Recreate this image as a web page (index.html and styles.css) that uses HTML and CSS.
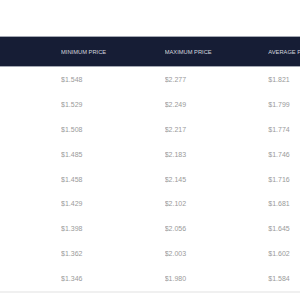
FILE: index.html
```html
<!DOCTYPE html>
<html>
<head>
<meta charset="utf-8">
<link rel="stylesheet" href="styles.css">
</head>
<body>
<div class="wrap">
<table class="prices">
  <colgroup>
    <col class="c-lead"><col class="c-val"><col class="c-val"><col class="c-val">
  </colgroup>
  <thead>
    <tr><th></th><th>MINIMUM PRICE</th><th>MAXIMUM PRICE</th><th>AVERAGE PRICE</th></tr>
  </thead>
  <tbody>
    <tr><td></td><td>$1.548</td><td>$2.277</td><td>$1.821</td></tr>
    <tr><td></td><td>$1.529</td><td>$2.249</td><td>$1.799</td></tr>
    <tr><td></td><td>$1.508</td><td>$2.217</td><td>$1.774</td></tr>
    <tr><td></td><td>$1.485</td><td>$2.183</td><td>$1.746</td></tr>
    <tr><td></td><td>$1.458</td><td>$2.145</td><td>$1.716</td></tr>
    <tr><td></td><td>$1.429</td><td>$2.102</td><td>$1.681</td></tr>
    <tr><td></td><td>$1.398</td><td>$2.056</td><td>$1.645</td></tr>
    <tr><td></td><td>$1.362</td><td>$2.003</td><td>$1.602</td></tr>
    <tr><td></td><td>$1.346</td><td>$1.980</td><td>$1.584</td></tr>
  </tbody>
</table>
</div>
</body>
</html>
```
FILE: styles.css
```css
html, body {
  margin: 0;
  padding: 0;
  background: #ffffff;
}
.wrap {
  width: 300px;
  height: 300px;
  overflow: hidden;
  padding-top: 36px;
  box-sizing: border-box;
}
.prices {
  border-collapse: collapse;
  table-layout: fixed;
  width: 372px;
  font-family: "Liberation Sans", Arial, sans-serif;
}
.c-lead {
  width: 61px;
}
.c-val {
  width: 103.5px;
}
.prices th, .prices td {
  padding: 0;
  text-align: left;
  white-space: nowrap;
  overflow: hidden;
}
.prices thead tr {
  background: #161d35;
  border-top: 1px solid #a4a8b3;
  border-bottom: 1px solid #a4a8b3;
}
.prices th {
  height: 29px;
  font-size: 5.75px;
  font-weight: normal;
  color: #d2d5de;
}
.prices td {
  height: 24.9px;
  font-size: 7px;
  color: #9a9a9a;
}
.prices tbody tr:last-child {
  border-bottom: 2px solid #f0f0f0;
}
```
